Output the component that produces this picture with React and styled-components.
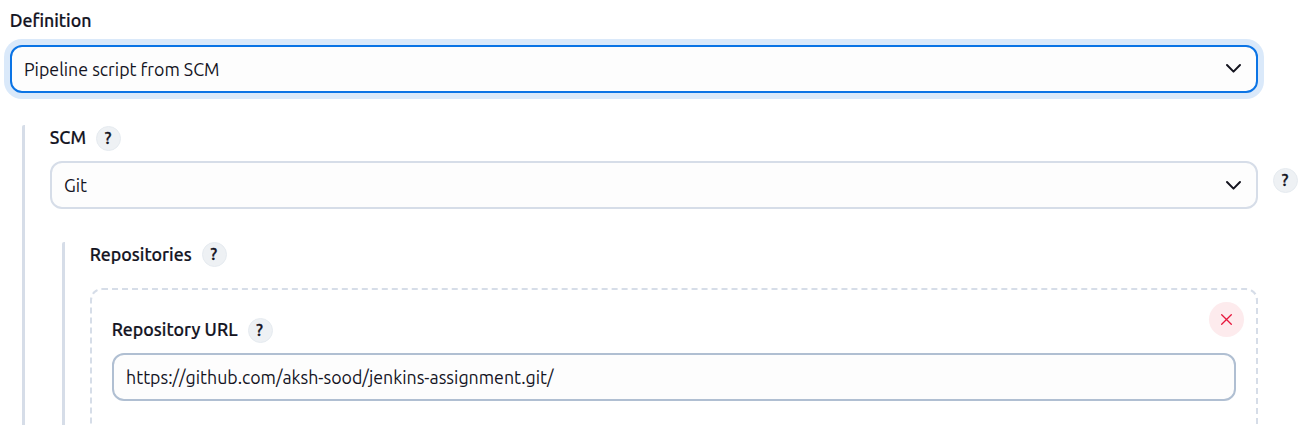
import React from "react";
import styled, { createGlobalStyle } from "styled-components";

const GlobalStyle = createGlobalStyle`
  *, *::before, *::after { box-sizing: border-box; }
  html, body { margin: 0; height: 100%; overflow: hidden; background: #fff; }
  body {
    font-family: Ubuntu, "Noto Sans", sans-serif;
    font-size: 17.77px;
    color: #14141f;
  }
`;

const Page = styled.main`
  height: 425px;
  overflow: hidden;
  padding: 8px 47px 0 10px;
`;

const LabelRow = styled.div`
  display: flex;
  align-items: center;
  height: 25px;
  gap: 10px;
`;

const Label = styled.label`
  font-weight: 500;
  line-height: 24px;
  margin-top: ${(p) => (p.$raised ? "-4px" : "-2px")};
  margin-left: -0.3px;
  white-space: nowrap;
  -webkit-text-stroke: 0.2px currentColor;
`;

const HelpButton = styled.button`
  flex: none;
  width: 25px;
  height: 25px;
  padding: 0 1px 1px 0;
  border: 1px solid #e6ebf0;
  border-radius: 50%;
  background: #eef1f4;
  color: #14141f;
  font: 500 16px/22px Ubuntu, "Noto Sans", sans-serif;
  -webkit-text-stroke: 0.4px currentColor;
  text-align: center;
`;

const Field = styled.div`
  display: flex;
  align-items: center;
  justify-content: space-between;
  flex: 1;
  height: 48px;
  padding: 0 14px 0 12px;
  border: 2px solid ${(p) => p.$border || "#d6dde8"};
  border-radius: 12px;
  background: #fdfdfd;
  box-shadow: ${(p) => (p.$focused ? "0 0 0 6px #dae9fa" : "none")};
`;

const Value = styled.span`
  white-space: nowrap;
  line-height: 24px;
  margin-top: ${(p) => (p.$raised ? "-2px" : "0")};
`;

const DefinitionField = styled.div`
  display: flex;
  margin-top: 12px;
`;

const Nested = styled.section`
  margin: ${(p) => p.$top} 0 0 12px;
  padding: ${(p) => p.$inset || "0"} 0 0 25px;
  height: 400px;
  border-left: 3px solid #d6dde8;
  border-top-left-radius: 2px;
`;

const ScmRow = styled.div`
  display: flex;
  gap: 15px;
  margin: 10px -40px 0 0;

  & > button { margin-top: 7px; }
`;

const RepositoryCard = styled.div`
  height: 200px;
  margin-top: 21px;
  padding: 12px 20px 0;
  border: 2px dashed #d6dde8;
  border-radius: 12px;
`;

const CardHeader = styled.div`
  display: flex;
  justify-content: space-between;
  align-items: flex-end;
  height: 41px;
  margin-right: -8px;
`;

const DeleteButton = styled.button`
  display: grid;
  place-items: center;
  align-self: flex-start;
  width: 35px;
  height: 35px;
  padding: 0 1px 1px 0;
  border: 0;
  border-radius: 50%;
  background: #fdebed;
`;

const UrlRow = styled.div`
  display: flex;
  margin-top: 10px;
`;

const ChevronIcon = styled.svg`
  flex: none;
  margin-bottom: ${(p) => (p.$raised ? "1px" : "0")};
`;

const Chevron = ({ raised }) => (
  <ChevronIcon $raised={raised} width="17" height="11" viewBox="0 0 17 11" fill="none">
    <path d="M2 2l6.5 6.6L15 2" stroke="#14141f" strokeWidth="2" strokeLinecap="round" strokeLinejoin="round" />
  </ChevronIcon>
);

const Cross = () => (
  <svg width="11" height="11" viewBox="0 0 11 11" fill="none">
    <path d="M.7.7l9.6 9.6M10.3.7L.7 10.3" stroke="#e6173c" strokeWidth="1.3" strokeLinecap="round" />
  </svg>
);

const Help = () => <HelpButton type="button">?</HelpButton>;

export default function App() {
  return (
    <>
      <GlobalStyle />
      <Page>
        <LabelRow>
          <Label>Definition</Label>
        </LabelRow>
        <DefinitionField>
          <Field $border="#0b74e5" $focused>
            <Value>Pipeline script from SCM</Value>
            <Chevron raised />
          </Field>
        </DefinitionField>
        <Nested $top="32px" $inset="1px">
          <LabelRow>
            <Label $raised>SCM</Label>
            <Help />
          </LabelRow>
          <ScmRow>
            <Field>
              <Value>Git</Value>
              <Chevron />
            </Field>
            <Help />
          </ScmRow>
          <Nested $top="33px">
            <LabelRow>
              <Label>Repositories</Label>
              <Help />
            </LabelRow>
            <RepositoryCard>
              <CardHeader>
                <LabelRow>
                  <Label $raised>Repository URL</Label>
                  <Help />
                </LabelRow>
                <DeleteButton type="button">
                  <Cross />
                </DeleteButton>
              </CardHeader>
              <UrlRow>
                <Field $border="#b0bfd2">
                  <Value>https://github.com/aksh-sood/jenkins-assignment.git/</Value>
                </Field>
              </UrlRow>
            </RepositoryCard>
          </Nested>
        </Nested>
      </Page>
    </>
  );
}
